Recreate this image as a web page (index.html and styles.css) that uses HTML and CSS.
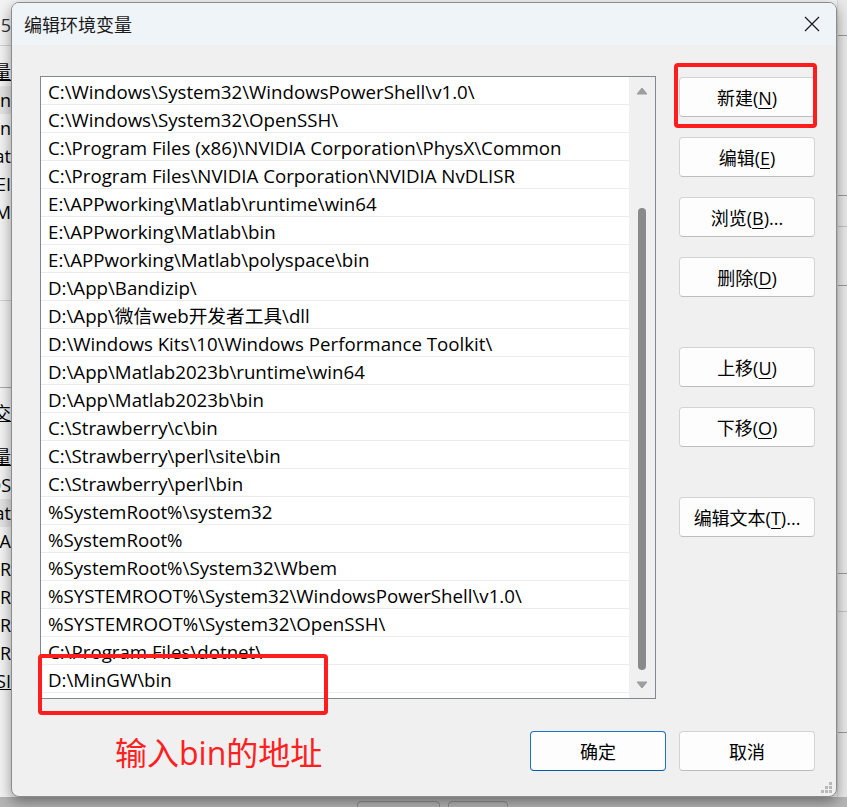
FILE: index.html
```html
<!DOCTYPE html>
<html lang="zh-CN">

<head>
    <meta charset="UTF-8">
    <meta name="viewport" content="width=device-width, initial-scale=1.0">
    <title>编辑环境变量</title>
    <link rel="stylesheet" href="styles.css">
</head>

<body>
    <div class="desktop">

        <!-- window behind the dialog, only its edges show -->
        <div class="backwin">
            <div class="back-main">
                <div class="back-left">
                    <div class="bl-row r-top">1.5</div>
                    <div class="bl-sep s-1"></div>
                    <div class="bl-row u r-grp1">交变量</div>
                    <div class="bl-row sel">On</div>
                    <div class="bl-row">On</div>
                    <div class="bl-row">at</div>
                    <div class="bl-row">EI</div>
                    <div class="bl-row">M</div>
                    <div class="bl-sep s-2"></div>
                    <div class="bl-sep dark s-3"></div>
                    <div class="bl-row u r-grp2">交</div>
                    <div class="bl-row u r-grp3">变量</div>
                    <div class="bl-row">OS</div>
                    <div class="bl-row sel">at</div>
                    <div class="bl-row">A</div>
                    <div class="bl-row">R</div>
                    <div class="bl-row">R</div>
                    <div class="bl-row">R</div>
                    <div class="bl-row">R</div>
                    <div class="bl-row u">SI</div>
                </div>
                <div class="back-right">
                    <div class="br-line l-1"></div>
                    <div class="br-line l-2"></div>
                    <div class="br-line l-3"></div>
                    <div class="br-line l-4"></div>
                    <div class="br-line l-5"></div>
                    <div class="br-line l-6"></div>
                    <div class="br-line l-7"></div>
                </div>
            </div>
            <div class="back-foot">
                <span class="back-btn wide"></span>
                <span class="back-btn"></span>
            </div>
        </div>

        <div class="dialog">
            <div class="titlebar">
                <span class="title">编辑环境变量</span>
                <svg class="close" width="16" height="16" viewBox="0 0 16 16">
                    <path d="M1 1 L15 15 M15 1 L1 15" stroke="#1a1a1a" stroke-width="1.2" fill="none" />
                </svg>
            </div>

            <div class="dialog-body">
                <div class="main">
                    <div class="listbox">
                        <ul class="paths">
                            <li>C:\Windows\System32\WindowsPowerShell\v1.0\</li>
                            <li>C:\Windows\System32\OpenSSH\</li>
                            <li>C:\Program Files (x86)\NVIDIA Corporation\PhysX\Common</li>
                            <li>C:\Program Files\NVIDIA Corporation\NVIDIA NvDLISR</li>
                            <li>E:\APPworking\Matlab\runtime\win64</li>
                            <li>E:\APPworking\Matlab\bin</li>
                            <li>E:\APPworking\Matlab\polyspace\bin</li>
                            <li>D:\App\Bandizip\</li>
                            <li>D:\App\微信web开发者工具\dll</li>
                            <li>D:\Windows Kits\10\Windows Performance Toolkit\</li>
                            <li>D:\App\Matlab2023b\runtime\win64</li>
                            <li>D:\App\Matlab2023b\bin</li>
                            <li>C:\Strawberry\c\bin</li>
                            <li>C:\Strawberry\perl\site\bin</li>
                            <li>C:\Strawberry\perl\bin</li>
                            <li>%SystemRoot%\system32</li>
                            <li>%SystemRoot%</li>
                            <li>%SystemRoot%\System32\Wbem</li>
                            <li>%SYSTEMROOT%\System32\WindowsPowerShell\v1.0\</li>
                            <li>%SYSTEMROOT%\System32\OpenSSH\</li>
                            <li>C:\Program Files\dotnet\</li>
                            <li>D:\MinGW\bin</li>
                        </ul>
                        <div class="scrollbar">
                            <div class="arrow up">
                                <svg width="12" height="8" viewBox="0 0 12 8">
                                    <path d="M6 1 L11 7 L1 7 Z" fill="#9e9e9e" stroke="#9e9e9e" stroke-linejoin="round" />
                                </svg>
                            </div>
                            <div class="track">
                                <div class="thumb"></div>
                            </div>
                            <div class="arrow down">
                                <svg width="12" height="8" viewBox="0 0 12 8">
                                    <path d="M1 1 L11 1 L6 7 Z" fill="#9e9e9e" stroke="#9e9e9e" stroke-linejoin="round" />
                                </svg>
                            </div>
                        </div>
                    </div>

                    <div class="side-buttons">
                        <button class="btn">新建(<u>N</u>)</button>
                        <button class="btn">编辑(<u>E</u>)</button>
                        <button class="btn">浏览(<u>B</u>)...</button>
                        <button class="btn">删除(<u>D</u>)</button>
                        <button class="btn group">上移(<u>U</u>)</button>
                        <button class="btn">下移(<u>O</u>)</button>
                        <button class="btn group">编辑文本(<u>T</u>)...</button>
                    </div>
                </div>

                <div class="footer">
                    <span class="note">输入bin的地址</span>
                    <div class="footer-buttons">
                        <button class="btn default">确定</button>
                        <button class="btn">取消</button>
                    </div>
                </div>
            </div>

            <!-- red marks drawn over the screenshot -->
            <span class="mark mark-new"></span>
            <span class="mark mark-path"></span>

            <svg class="grip" width="12" height="11" viewBox="0 0 12 11">
                <rect x="8" y="0" width="3" height="3" fill="#b9b9b9" />
                <rect x="4" y="4" width="3" height="3" fill="#b9b9b9" />
                <rect x="8" y="4" width="3" height="3" fill="#b9b9b9" />
                <rect x="0" y="8" width="3" height="3" fill="#b9b9b9" />
                <rect x="4" y="8" width="3" height="3" fill="#b9b9b9" />
                <rect x="8" y="8" width="3" height="3" fill="#b9b9b9" />
            </svg>
        </div>

    </div>
</body>

</html>
```

FILE: styles.css
```css
* {
    box-sizing: border-box;
}

html,
body {
    margin: 0;
    height: 100%;
}

body {
    font-family: "Open Sans", "Noto Sans CJK SC", sans-serif;
    background-color: #f3f3f3;
    color: #000;
    overflow: hidden;
}

.desktop {
    position: relative;
    width: 847px;
    height: 807px;
    overflow: hidden;
}

/* background window */

.backwin {
    position: absolute;
    inset: 0;
    display: flex;
    flex-direction: column;
    background-color: #f3f3f3;
}

.back-main {
    flex: 1;
    display: flex;
    justify-content: space-between;
}

.back-left {
    width: 11px;
    overflow: hidden;
    display: flex;
    flex-direction: column;
    font-size: 18px;
}

.bl-row {
    height: 28px;
    line-height: 28px;
    display: flex;
    justify-content: flex-end;
    white-space: nowrap;
}

.bl-row.sel {
    background-color: #e3e3e3;
}

.bl-row.u {
    text-decoration: underline;
}

.r-top {
    margin-top: 11px;
    color: #333;
}

.r-grp1 {
    margin-top: 12px;
}

.r-grp2 {
    margin-top: 11px;
}

.r-grp3 {
    margin-top: 16px;
}

.bl-sep {
    height: 1px;
    background-color: #d2d2d2;
}

.bl-sep.dark {
    background-color: #a8a8a8;
}

.s-1 {
    margin-top: 6px;
}

.s-2 {
    margin-top: 74px;
}

.s-3 {
    margin-top: 86px;
}

.back-right {
    width: 10px;
    background-color: #e9e9e9;
    border-left: 1px solid #d8d8d8;
    display: flex;
    flex-direction: column;
}

.br-line {
    height: 1px;
    background-color: #9a9a9a;
}

.l-1 {
    margin-top: 35px;
}

.l-2 {
    margin-top: 159px;
}

.l-3 {
    margin-top: 30px;
    background-color: #c4c4c4;
}

.l-4 {
    margin-top: 58px;
}

.l-5 {
    margin-top: 287px;
}

.l-6 {
    margin-top: 37px;
    background-color: #c4c4c4;
}

.l-7 {
    margin-top: 120px;
}

.back-foot {
    height: 10px;
    background-color: #b5b5b5;
    display: flex;
    gap: 8px;
    padding: 4px 0 0 357px;
}

.back-btn {
    width: 60px;
    height: 14px;
    border: 1px solid #8e8e8e;
    border-radius: 4px;
}

.back-btn.wide {
    width: 83px;
}

/* dialog */

.dialog {
    position: absolute;
    left: 11px;
    top: 2px;
    width: 826px;
    height: 795px;
    display: flex;
    flex-direction: column;
    background-color: #f0f0f0;
    border: 1px solid #8c8c8c;
    border-radius: 8px;
    box-shadow: 0 5px 14px rgba(0, 0, 0, 0.4);
    overflow: hidden;
}

.titlebar {
    height: 42px;
    flex-shrink: 0;
    display: flex;
    align-items: center;
    justify-content: space-between;
    padding: 0 16px 0 12px;
    background-color: #eff4f9;
}

.title {
    font-family: "Noto Sans CJK SC", sans-serif;
    font-size: 18px;
    color: #1a1a1a;
}

.close {
    display: block;
}

.dialog-body {
    flex: 1;
    display: flex;
    flex-direction: column;
    padding: 31px 21px 0 28px;
}

.main {
    display: flex;
    gap: 23px;
}

.listbox {
    width: 616px;
    height: 623px;
    display: flex;
    background-color: #fff;
    border: 1px solid #828790;
}

.paths {
    flex: 1;
    list-style: none;
    margin: 0;
    padding: 0;
    font-size: 18.7px;
}

.paths li {
    height: 28px;
    line-height: 27px;
    padding: 1px 0 0 7px;
    border-bottom: 1px solid #ececec;
    white-space: nowrap;
    overflow: hidden;
}

.scrollbar {
    width: 26px;
    display: flex;
    flex-direction: column;
    background-color: #f0f0f0;
}

.arrow {
    height: 28px;
    display: flex;
    align-items: center;
    justify-content: center;
}

.arrow.down {
    height: 26px;
}

.track {
    flex: 1;
    display: flex;
    justify-content: center;
}

.thumb {
    width: 8px;
    height: 462px;
    margin-top: 103px;
    background-color: #8a8a8a;
    border-radius: 4px;
}

.side-buttons {
    width: 136px;
    margin-top: 1px;
    display: flex;
    flex-direction: column;
    gap: 20px;
}

.btn {
    height: 40px;
    width: 136px;
    font-family: "Open Sans", "Noto Sans CJK SC", sans-serif;
    font-size: 18px;
    color: #000;
    background-color: #fdfdfd;
    border: 1px solid #d3d3d3;
    border-bottom-color: #bdbdbd;
    border-radius: 4px;
    padding: 0;
}

.btn u {
    text-underline-offset: 3px;
}

.btn.group {
    margin-top: 30px;
}

.btn.default {
    border: 1px solid #1a73c8;
    border-bottom-color: #005aae;
}

.footer {
    display: flex;
    align-items: center;
    height: 40px;
    margin-top: 32px;
}

.note {
    margin: 4px 0 0 75px;
    font-family: "Open Sans", "Noto Sans CJK SC", sans-serif;
    font-size: 32px;
    line-height: 40px;
    color: #ff2020;
}

.footer-buttons {
    margin-left: auto;
    display: flex;
    gap: 13px;
}

.mark {
    position: absolute;
    border: 4px solid #ff1d1d;
    border-radius: 4px;
}

.mark-new {
    left: 662px;
    top: 60px;
    width: 143px;
    height: 65px;
}

.mark-path {
    left: 26px;
    top: 651px;
    width: 290px;
    height: 61px;
}

.grip {
    position: absolute;
    right: 3px;
    bottom: 3px;
}
```
